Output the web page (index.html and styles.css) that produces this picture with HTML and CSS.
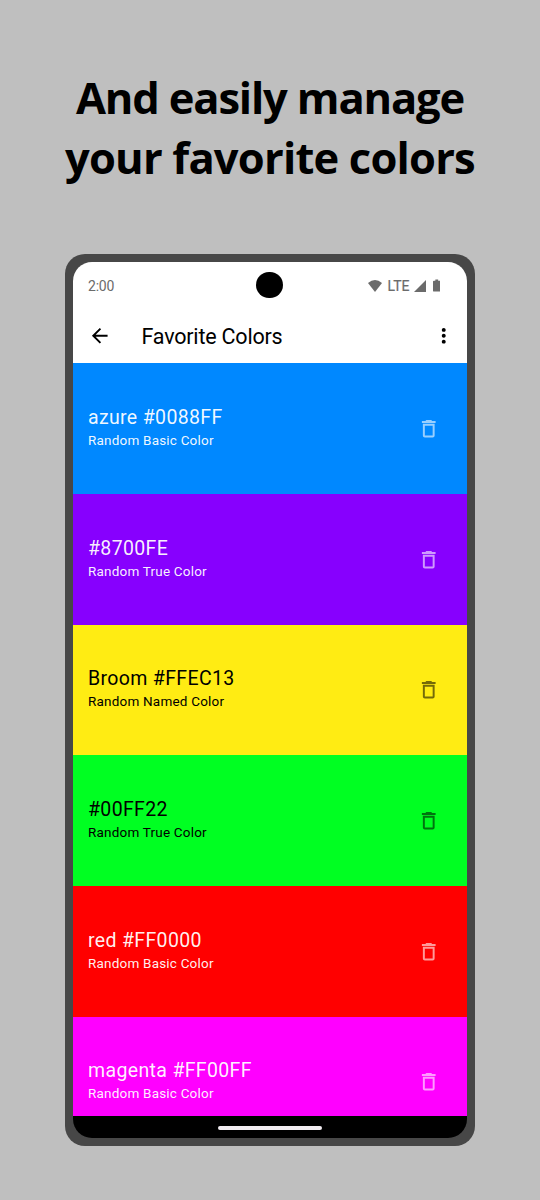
FILE: index.html
```html
<!DOCTYPE html>
<html lang="en">
<head>
<meta charset="utf-8">
<title>Favorite Colors</title>
<link rel="stylesheet" href="styles.css">
</head>
<body>
<svg class="symbols" width="0" height="0" aria-hidden="true">
  <symbol id="trash" viewBox="0 0 24 24"><path d="M6 19c0 1.1.9 2 2 2h8c1.1 0 2-.9 2-2V7H6v12zM8 9h8v10H8V9zm7.5-5l-1-1h-5l-1 1H5v2h14V4h-3.5z"/></symbol>
</svg>
<h1 class="headline"><span class="line-one">And easily manage</span><br><span class="line-two">your favorite colors</span></h1>
<main class="phone">
  <div class="screen">
    <div class="status">
      <span class="time">2:00</span>
      <span class="camera"></span>
      <div class="indicators">
        <svg class="wifi" viewBox="0 0 14 12"><path d="M0 3Q7-3 14 3L7 12z"/></svg>
        <span class="network">LTE</span>
        <svg class="signal" viewBox="0 0 12 12"><path d="M12 0v12H0z"/></svg>
        <svg class="battery" viewBox="0 0 8 13"><path d="M2.5 0h3v1.3H7q1 0 1 1V12q0 1-1 1H1q-1 0-1-1V2.3q0-1 1-1h1.5z"/></svg>
      </div>
    </div>
    <header class="appbar">
      <svg class="back" viewBox="0 0 24 24"><path d="M20 11H7.83l5.59-5.59L12 4l-8 8 8 8 1.41-1.41L7.83 13H20v-2z"/></svg>
      <h2 class="title">Favorite Colors</h2>
      <svg class="more" viewBox="0 0 24 24"><path d="M12 8c1.1 0 2-.9 2-2s-.9-2-2-2-2 .9-2 2 .9 2 2 2zm0 2c-1.1 0-2 .9-2 2s.9 2 2 2 2-.9 2-2-.9-2-2-2zm0 6c-1.1 0-2 .9-2 2s.9 2 2 2 2-.9 2-2-.9-2-2-2z"/></svg>
    </header>
    <ul class="colors">
      <li class="row azure"><div><p class="name">azure #0088FF</p><p class="kind">Random Basic Color</p></div><svg class="trash"><use href="#trash"/></svg></li>
      <li class="row violet"><div><p class="name">#8700FE</p><p class="kind">Random True Color</p></div><svg class="trash"><use href="#trash"/></svg></li>
      <li class="row broom dark"><div><p class="name">Broom #FFEC13</p><p class="kind">Random Named Color</p></div><svg class="trash"><use href="#trash"/></svg></li>
      <li class="row green dark"><div><p class="name">#00FF22</p><p class="kind">Random True Color</p></div><svg class="trash"><use href="#trash"/></svg></li>
      <li class="row red"><div><p class="name">red #FF0000</p><p class="kind">Random Basic Color</p></div><svg class="trash"><use href="#trash"/></svg></li>
      <li class="row magenta"><div><p class="name">magenta #FF00FF</p><p class="kind">Random Basic Color</p></div><svg class="trash"><use href="#trash"/></svg></li>
    </ul>
    <div class="navbar"><span class="handle"></span></div>
  </div>
</main>
</body>
</html>
```
FILE: styles.css
```css
* { box-sizing: border-box; margin: 0; padding: 0; }
body {
  width: 540px;
  height: 1200px;
  overflow: hidden;
  background: #bfbfbf;
  color: #000;
  font-family: Roboto, sans-serif;
}
.symbols { display: block; }
.headline {
  height: 254px;
  padding-top: 68px;
  text-align: center;
  white-space: nowrap;
  font: 700 43.5px/60px "Open Sans", sans-serif;
}
.line-one { letter-spacing: -1.15px; }
.line-two { letter-spacing: -.8px; }
.phone {
  width: 410px;
  height: 892px;
  margin-left: 65px;
  padding: 8px;
  border-radius: 20px;
  background: #474747;
}
.screen {
  display: flex;
  flex-direction: column;
  height: 876px;
  overflow: hidden;
  border-radius: 19px;
  background: #474747;
}
.status {
  display: flex;
  align-items: center;
  justify-content: space-between;
  position: relative;
  flex: none;
  height: 47px;
  padding: 0 27px 0 15px;
  color: #6b6b6b;
  background: #fff;
}
.time { font-size: 14px; line-height: 16px; padding-top: 1px; letter-spacing: -.2px; }
.camera {
  position: absolute;
  left: 183.3px;
  top: 9.8px;
  width: 26.6px;
  height: 26.6px;
  border-radius: 50%;
  background: #000;
}
.indicators { display: flex; align-items: center; }
.indicators svg { fill: #6b6b6b; }
.wifi { width: 14px; height: 12px; margin-right: 6px; }
.network { font-size: 14px; line-height: 16px; -webkit-text-stroke: .2px #6b6b6b; }
.signal { width: 12px; height: 12px; margin: 0 7px 0 4px; }
.battery { width: 7.5px; height: 13px; }
.appbar {
  display: flex;
  align-items: center;
  flex: none;
  height: 54.3px;
  padding: 0 11.5px 0 15px;
  background: #fff;
}
.back, .more { width: 23.5px; height: 23.5px; }
.title { flex: 1; margin-left: 30px; font-size: 21.5px; font-weight: 400; letter-spacing: -.2px; }
.colors { flex: 1; min-height: 0; overflow: hidden; list-style: none; }
.row {
  display: flex;
  align-items: center;
  justify-content: space-between;
  height: 130.67px;
  padding: 0 26.5px 0 15px;
  color: rgba(255, 255, 255, .95);
}
.dark { color: #000; }
.azure { background: #08f; }
.violet { background: #8700fe; }
.broom { background: #ffec13; }
.green { background: #00ff22; }
.red { background: #f00; }
.magenta { background: #f0f; }
.name { font-size: 19.5px; line-height: 24px; letter-spacing: .35px; }
.kind { font-size: 13.5px; line-height: 20px; letter-spacing: .2px; }
.row > div { padding-bottom: 1.2px; }
.trash { width: 23.5px; height: 23.5px; fill: #fff; opacity: .6; }
.dark .trash { fill: #000; opacity: .54; }
.navbar {
  display: flex;
  align-items: center;
  justify-content: center;
  flex: none;
  height: 22px;
  padding-top: 1px;
  background: #000;
}
.handle { width: 104px; height: 4px; border-radius: 2px; background: #f3eef3; }
```
